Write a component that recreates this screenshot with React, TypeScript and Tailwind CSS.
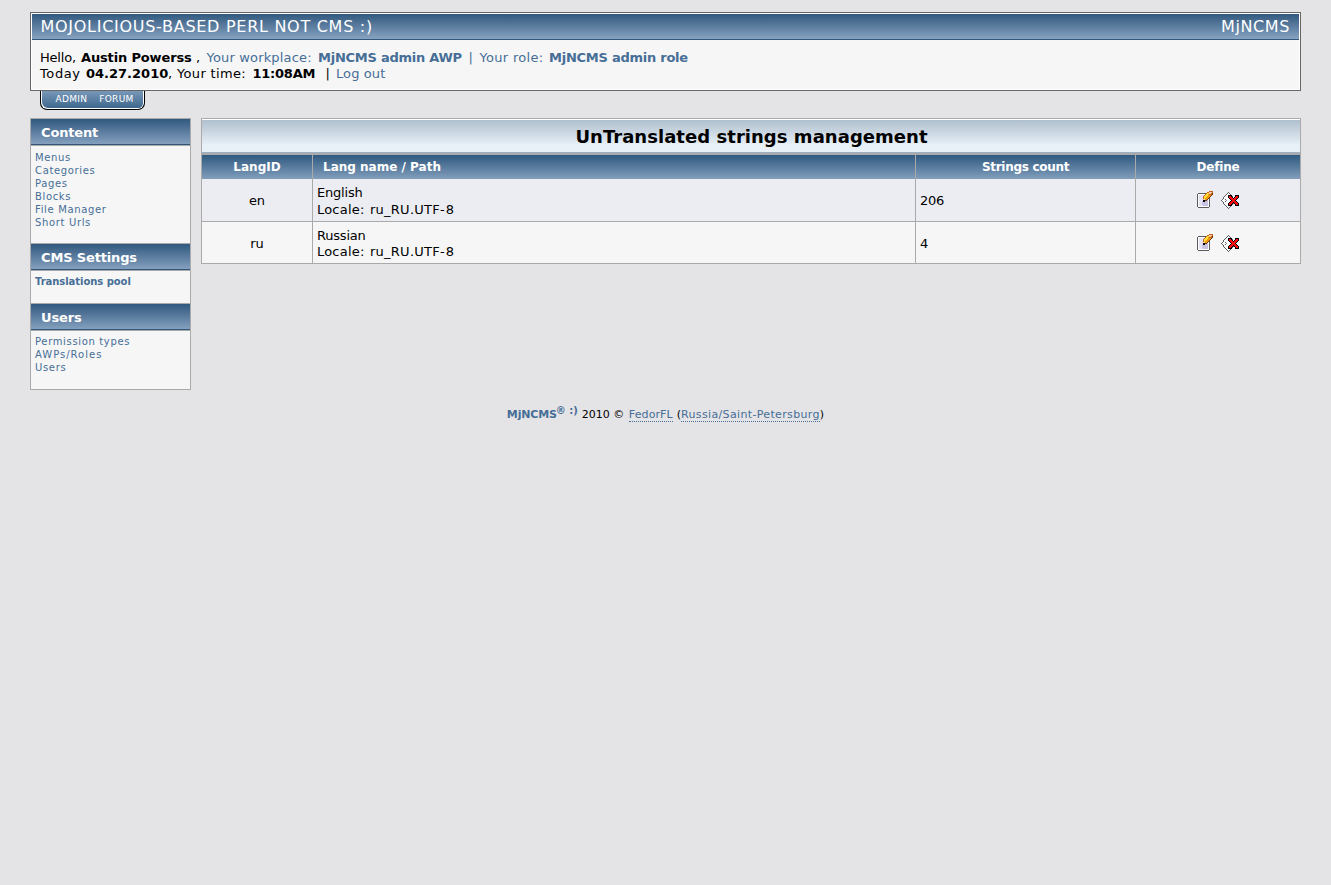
import type { ReactNode } from "react";

const link = "text-[#466e96]";

const palette: Record<string, string> = {
  G: "#5c5c60",
  W: "#ffffff",
  L: "#e6e2f5",
  M: "#c9c2e4",
  B: "#6e3a10",
  K: "#000000",
  Y: "#ffe03a",
  O: "#f29a08",
  P: "#f7c9a0",
  D: "#c4601a",
  R: "#fb0d0d",
  S: "#8a8a8e",
};

const editPixels = [
  "............DDDD",
  "..........DDPPPD",
  ".GGGGGGGGDYYPPDB",
  "GWWWWWWWDYYODDDB",
  "GWLLLLLDYYYOOOB.",
  "GWLLLLDYYYOOOB..",
  "GWLLLLDYYOOOB...",
  "GWLLLLDYOOOBG...",
  "GWLLLLPPOOBWG...",
  "GWLLLLKKBBMWG...",
  "GWLLLMKKMMMWG...",
  "GWLLLMMMMMMWG...",
  "GWLLLMMMMMMWG...",
  "GWLLLMMMMMMWG...",
  "GWLLLLMMMMMWG...",
  "GWWWWWWWWWWWG...",
  ".GGGGGGGGGGG....",
];

const deletePixels = [
  "..................",
  ".......G..........",
  "......GWG.........",
  ".....GWWWG........",
  "....GWWWWWG.......",
  "...GWWWWWWWG......",
  "..GWWWWWWWWWWG....",
  "..GWWWWWWWWWWWG...",
  ".GWWGWWWWWWWWWG...",
  "GWWWWSWWWWWWWWG...",
  ".GWWGWWWWWWWWWG...",
  "..GWWWWWWWWWWG....",
  "..GWWWWWWWWWG.....",
  "...GWWWWWWWG......",
  "....GWWWWWG.......",
  ".....GWWWG........",
  "......GWG.........",
  ".......G..........",
];

const crossPixels = [
  "KKKK...KKKK",
  "KRRK...KRRK",
  "KRRRK.KRRRK",
  ".KRRRKRRRK.",
  "..KRRRRRK..",
  "...KRRRK...",
  "..KRRRRRK..",
  ".KRRRKRRRK.",
  "KRRRK.KRRRK",
  "KRRK...KRRK",
  "KKKK...KKKK",
];

function Pixels({ rows, x = 0, y = 0 }: { rows: string[]; x?: number; y?: number }) {
  return (
    <>
      {rows.flatMap((row, r) =>
        [...row].map((c, i) =>
          c === "." ? null : <rect key={`${r}-${i}`} x={x + i} y={y + r} width="1" height="1" fill={palette[c]} />,
        ),
      )}
    </>
  );
}

function EditIcon() {
  return (
    <svg width="16" height="18" viewBox="0 0 16 18" shapeRendering="crispEdges">
      <Pixels rows={editPixels} />
    </svg>
  );
}

function DeleteIcon() {
  return (
    <svg width="18" height="18" viewBox="0 0 18 18" shapeRendering="crispEdges">
      <Pixels rows={deletePixels} />
      <Pixels rows={crossPixels} x={7} y={4} />
    </svg>
  );
}

function SideBlock({ title, children, height, tight }: { title: string; children: ReactNode; height: string; tight?: boolean }) {
  return (
    <section className={height}>
      <h2 className="h-[27px] border-b border-[#aaa] bg-linear-to-b from-[#31597f] to-[#88a3c1] pl-[10px] text-[13px] leading-[27px] font-bold tracking-[-0.15px] text-white shadow-[inset_0_-1px_0_#33577b]">
        {title}
      </h2>
      <ul className={`${tight ? "pt-1" : "pt-[5px]"} pl-1 text-[10px] leading-[13px] tracking-[0.65px] ${link}`}>{children}</ul>
    </section>
  );
}

function Row({ id, name, count, tone, pad }: { id: string; name: string; count: string; tone: string; pad: string }) {
  return (
    <div className={`grid grid-cols-[110px_602px_219px_1fr] gap-px bg-[#aaa] ${tone}`}>
      <div className="pt-[14px] text-center leading-4">{id}</div>
      <div className={`flex flex-col pl-1 ${pad}`}>
        <span className="tracking-[-0.2px]">{name}</span>
        <span>
          <span className="inline-block w-[53px] tracking-[0.2px]">Locale:</span>
          <span className="tracking-[0.25px]">ru_RU.UTF</span>
          <span className="tracking-[1px]">-8</span>
        </span>
      </div>
      <div className="pt-[14px] pl-1 leading-4 tracking-[-0.3px]">{count}</div>
      <div className="flex items-start justify-center gap-2 pt-3">
        <EditIcon />
        <DeleteIcon />
      </div>
    </div>
  );
}

export default function App() {
  return (
    <div className="min-h-[885px] bg-[#e4e4e6] px-[30px] pt-3 font-['DejaVu_Sans',sans-serif] text-[13px] text-black">
      <header className="h-[79px] border border-[#666] bg-[#f6f6f6] shadow-[inset_0_0_0_1px_#fff]">
        <div className="mx-px mt-px flex h-[26px] justify-between border-b border-[#33577b] bg-linear-to-b from-[#31597f] to-[#88a3c1] pr-[9px] pl-[8.5px] text-[16px] leading-[26px] text-white">
          <span className="tracking-[0.72px]">MOJOLICIOUS-BASED PERL NOT CMS :)</span>
          <span className="tracking-[0.6px]">MjNCMS</span>
        </div>
        <div className="pt-[10px] pl-[9px] leading-4 whitespace-nowrap">
          <div className="flex">
            <span className="w-[41px] tracking-[-0.2px]">Hello,</span>
            <b className="w-[115px] tracking-[-0.15px]">Austin Powerss</b>
            <span className="w-[10.5px]">,</span>
            <span className={`w-[111.5px] tracking-[0.17px] ${link}`}>Your workplace:</span>
            <b className={`w-[150.5px] tracking-[-0.25px] ${link}`}>MjNCMS admin AWP</b>
            <span className={`w-[11px] ${link}`}>|</span>
            <span className={`w-[69.5px] tracking-[0.3px] ${link}`}>Your role:</span>
            <b className={`tracking-[-0.25px] ${link}`}>MjNCMS admin role</b>
          </div>
          <div className="flex">
            <span className="w-[46px] tracking-[0.6px]">Today</span>
            <b className="w-[82px]">04.27.2010</b>
            <span className="w-[84.5px] tracking-[0.35px]">, Your time:</span>
            <b className="w-[73px] tracking-[-0.25px]">11:08AM</b>
            <span className="w-[10.5px]">|</span>
            <span className={`tracking-[0.1px] ${link}`}>Log out</span>
          </div>
        </div>
      </header>
      <nav className="ml-[10px] flex h-[19px] w-[105px] gap-3 rounded-b-[7px] border border-t-0 border-black bg-linear-to-b from-[#7898b8] to-[#3b658c] pl-[14.5px] text-[9px] leading-[16px] tracking-[0.3px] text-white shadow-[inset_1px_-1px_0_#fff,inset_-1px_0_0_#fff]">
        <span>ADMIN</span>
        <span>FORUM</span>
      </nav>
      <div className="mt-2 flex items-start gap-[10px]">
        <aside className="w-[161px] shrink-0 border border-[#aaa] bg-[#f6f6f6]">
          <SideBlock title="Content" height="h-[124px]">
            <li>Menus</li>
            <li>Categories</li>
            <li>Pages</li>
            <li>Blocks</li>
            <li>File Manager</li>
            <li>Short Urls</li>
          </SideBlock>
          <div className="border-y border-[#aaa]">
            <SideBlock title="CMS Settings" height="h-[59px]" tight>
              <li className="font-bold tracking-[-0.05px]">Translations pool</li>
            </SideBlock>
          </div>
          <SideBlock title="Users" height="h-[85px]" tight>
            <li>Permission types</li>
            <li className="tracking-[1px]">AWPs/Roles</li>
            <li>Users</li>
          </SideBlock>
        </aside>
        <main className="min-w-0 flex-1 border border-[#aaa]">
          <h1 className="h-[34px] border-t border-b border-t-white border-b-[#9cb0c3] bg-linear-to-b from-[#b0c0ce] to-[#e9f1f8] to-80% pl-px text-center text-[18px] leading-[34px] font-bold tracking-[0.04px]">
            UnTranslated strings management
          </h1>
          <div className="grid h-[26px] grid-cols-[110px_602px_219px_1fr] gap-px border-t-2 border-b border-[#aaa] bg-[#aaa] text-center text-[12px] leading-6 font-bold text-white *:bg-linear-to-b *:from-[#2f5a80] *:to-[#829ebc]">
            <div>LangID</div>
            <div className="pl-[10px] text-left">Lang name / Path</div>
            <div className="tracking-[-0.3px]">Strings count</div>
            <div className="tracking-[-0.15px]">Define</div>
          </div>
          <Row id="en" name="English" count="206" pad="pt-[5px] leading-[17px]" tone="h-[43px] border-b border-[#aaa] *:bg-[#ebedf2]" />
          <Row id="ru" name="Russian" count="4" pad="pt-[6px] leading-4" tone="h-[41px] *:bg-[#f6f6f6]" />
        </main>
      </div>
      <footer className="mt-4 flex justify-center text-[11px] leading-[18px] whitespace-nowrap">
        <span className={`w-[49px] font-bold tracking-[-0.15px] ${link}`}>MjNCMS</span>
        <sup className={`top-0 w-[26px] text-[10px] leading-[9px] font-bold ${link}`}>® :)</sup>
        <span className="w-[47px]">2010 ©</span>
        <span className={`h-4 border-b border-dotted border-[#466e96] tracking-[0.1px] ${link}`}>FedorFL</span>
        <span className="pl-1">(</span>
        <span className={`h-4 border-b border-dotted border-[#466e96] tracking-[0.35px] ${link}`}>Russia/Saint-Petersburg</span>
        <span>)</span>
      </footer>
    </div>
  );
}
